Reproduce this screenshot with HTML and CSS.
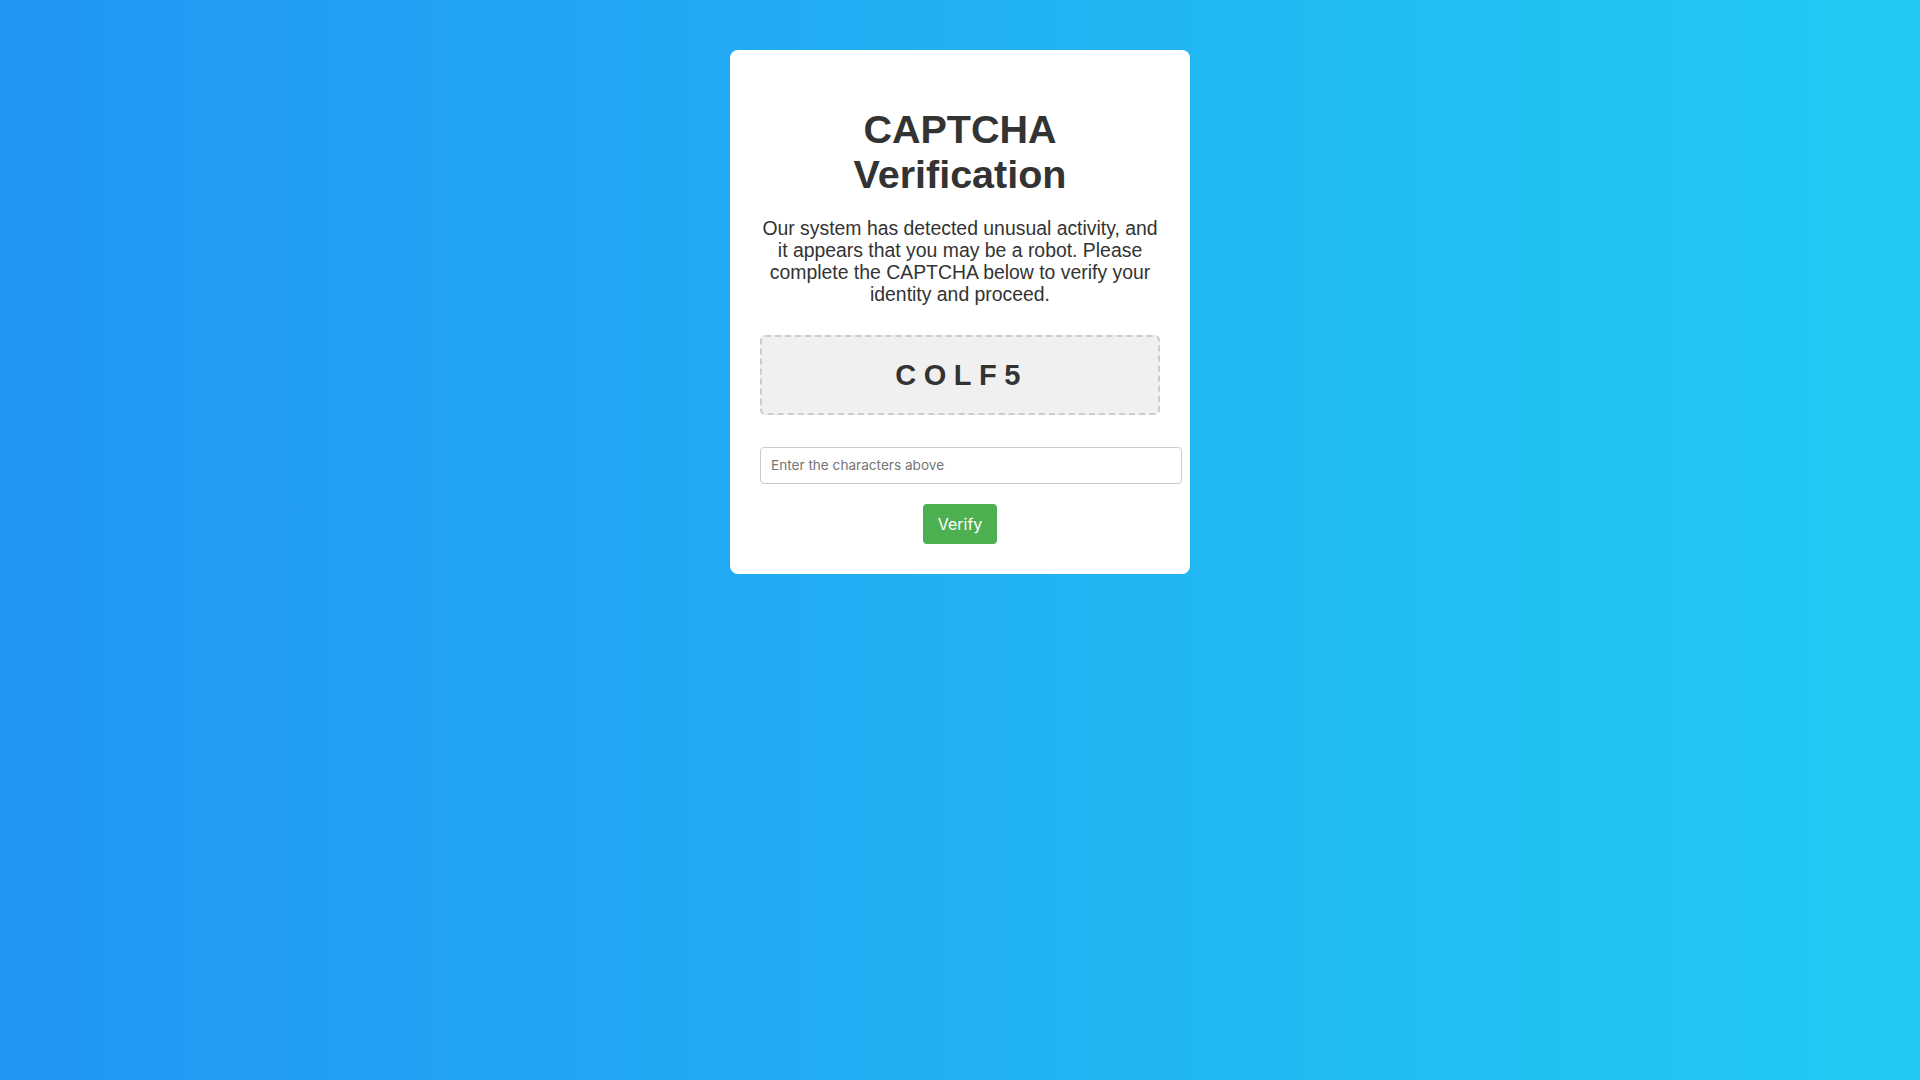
FILE: index.html
```html
<!DOCTYPE html>
<html lang="en">
<head>
<meta charset="utf-8">
<title>CAPTCHA Verification</title>
<link rel="stylesheet" href="styles.css">
</head>
<body>
  <div class="card">
    <h1 class="title">CAPTCHA Verification</h1>
    <p class="message">Our system has detected unusual activity, and it appears that you may be a robot. Please complete the CAPTCHA below to verify your identity and proceed.</p>
    <div class="captcha">COLF5</div>
    <form class="form">
      <input class="field" type="text" placeholder="Enter the characters above">
      <div class="actions">
        <button class="btn" type="button">Verify</button>
      </div>
    </form>
  </div>
</body>
</html>
```

FILE: styles.css
```css
html, body {
  margin: 0;
  padding: 0;
}
body {
  min-height: 100vh;
  background: linear-gradient(to right, #2196F3, #21CBF3);
  font-family: "Liberation Sans", Arial, sans-serif;
  color: #333;
  display: flex;
  flex-direction: column;
  align-items: center;
  padding-top: 50px;
  box-sizing: border-box;
}
.card {
  width: 400px;
  padding: 30px;
  background: #fff;
  border-radius: 8px;
  text-align: center;
}
.title {
  font-size: 39.5px;
  line-height: 45px;
  font-weight: bold;
  margin: 26.5px 0 0;
  color: #333;
}
.message {
  font-size: 19.4px;
  line-height: 22.1px;
  margin: 20px 0 0;
  color: #333;
}
.captcha {
  margin-top: 30.5px;
  height: 76px;
  box-sizing: content-box;
  border: 2px dashed #ccc;
  border-radius: 5px;
  background: #f0f0f0;
  display: flex;
  align-items: center;
  justify-content: center;
  font-size: 29px;
  font-weight: bold;
  letter-spacing: 7.5px;
  text-indent: 3px;
  color: #333;
}
.form {
  margin: 31.5px 0 0;
}
.field {
  display: block;
  width: 100%;
  padding: 10px;
  border: 1px solid #ccc;
  border-radius: 4px;
  font-family: Inter, "Noto Sans", sans-serif;
  font-size: 13.6px;
  line-height: 15px;
  color: #333;
  margin: 0;
}
.field::placeholder {
  color: #757575;
}
.actions {
  margin-top: 20.5px;
  display: flex;
  justify-content: center;
}
.btn {
  background: #4CAF50;
  color: #fff;
  border: none;
  border-radius: 4px;
  padding: 10px 15px;
  font-family: Inter, "Noto Sans", sans-serif;
  font-size: 16px;
  line-height: 20px;
  cursor: pointer;
}
```
